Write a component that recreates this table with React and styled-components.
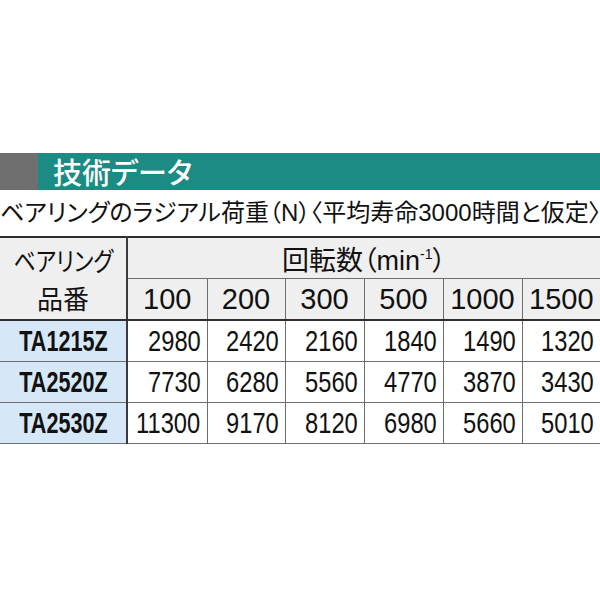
import React from "react";
import styled, { createGlobalStyle } from "styled-components";

const GlobalStyle = createGlobalStyle`
  body {
    margin: 0;
    background: #fff;
    font-family: "Liberation Sans", "Noto Sans CJK JP", sans-serif;
  }
`;

const colWidths = [127, 80, 78, 79, 79, 79, 78];

const speeds = ["100", "200", "300", "500", "1000", "1500"];

const rows = [
  { id: "TA1215Z", values: ["2980", "2420", "2160", "1840", "1490", "1320"] },
  { id: "TA2520Z", values: ["7730", "6280", "5560", "4770", "3870", "3430"] },
  { id: "TA2530Z", values: ["11300", "9170", "8120", "6980", "5660", "5010"] },
];

const App = () => {
  return (
    <>
      <GlobalStyle />
      <Page>
        <TitleBar>
          <TitleMark />
          <TitleText>技術データ</TitleText>
        </TitleBar>
        <Subtitle>ベアリングのラジアル荷重（N）〈平均寿命3000時間と仮定〉</Subtitle>
        <Table>
          <colgroup>
            {colWidths.map((w, i) => (
              <Col key={i} $w={w} />
            ))}
          </colgroup>
          <thead>
            <tr>
              <IdHead rowSpan={2}>
                <Squeeze $origin="center" $scale={0.84}>
                  ベアリング
                </Squeeze>
                <br />
                品番
              </IdHead>
              <SpanHead colSpan={6}>
                回転数（min<Sup>-1</Sup>）
              </SpanHead>
            </tr>
            <tr>
              {speeds.map((s) => (
                <NumHead key={s}>{s}</NumHead>
              ))}
            </tr>
          </thead>
          <tbody>
            {rows.map((r) => (
              <tr key={r.id}>
                <IdCell>
                  <Squeeze $origin="center" $scale={0.72}>
                    {r.id}
                  </Squeeze>
                </IdCell>
                {r.values.map((v, i) => (
                  <NumCell key={i}>
                    <Squeeze $origin="right" $scale={0.79}>
                      {v}
                    </Squeeze>
                  </NumCell>
                ))}
              </tr>
            ))}
          </tbody>
        </Table>
      </Page>
    </>
  );
};

const Page = styled.div`
  width: 600px;
  height: 600px;
  padding-top: 153px;
  box-sizing: border-box;
  overflow: hidden;
`;

const TitleBar = styled.div`
  display: flex;
  height: 37px;
  background: #1b8b84;
`;

const TitleMark = styled.div`
  width: 38px;
  background: #6f6f6f;
`;

const TitleText = styled.div`
  padding-left: 15px;
  color: #fff;
  font-family: "Noto Sans CJK JP", sans-serif;
  font-feature-settings: "palt";
  font-size: 29px;
  font-weight: 500;
  line-height: 37px;
`;

const Subtitle = styled.div`
  height: 46px;
  line-height: 46px;
  color: #111;
  font-family: "Liberation Sans", "Noto Sans CJK JP", sans-serif;
  font-feature-settings: "palt";
  font-size: 24px;
  white-space: nowrap;
`;

const Table = styled.table`
  width: 600px;
  table-layout: fixed;
  border-collapse: collapse;
  border-top: 2px solid #2e2e2e;
  border-bottom: 1px solid #9a9a9a;
  font-family: "Liberation Sans", "Noto Sans CJK JP", sans-serif;
  color: #111;
`;

const Col = styled.col`
  width: ${(p) => p.$w}px;
`;

const Squeeze = styled.span`
  display: inline-block;
  white-space: nowrap;
  transform: scaleX(${(p) => p.$scale});
  transform-origin: ${(p) => p.$origin} center;
`;

const Cell = styled.td`
  padding: 0;
  border: 1px solid #6e6e6e;
  &:first-child {
    border-left: none;
  }
  &:last-child {
    border-right: none;
  }
`;

const HeadCell = styled(Cell).attrs({ as: "th" })`
  background: #efefef;
  font-weight: normal;
  height: 40px;
`;

const IdHead = styled(HeadCell)`
  border-right: 2px solid #3a3a3a;
  border-bottom: 2px solid #2e2e2e;
  font-family: "Noto Sans CJK JP", sans-serif;
  font-feature-settings: "palt";
  font-size: 26px;
  line-height: 38px;
`;

const SpanHead = styled(HeadCell)`
  border-top: none;
  font-feature-settings: "palt";
  font-size: 27px;
  text-align: center;
`;

const Sup = styled.sup`
  font-size: 14px;
  vertical-align: 11px;
  line-height: 0;
`;

const NumHead = styled(HeadCell)`
  border-bottom: 2px solid #2e2e2e;
  font-size: 29px;
  text-align: center;
`;

const IdCell = styled(Cell)`
  background: #d6e8f7;
  border-right: 2px solid #3a3a3a;
  height: 40px;
  font-size: 30px;
  font-weight: bold;
  text-align: center;
`;

const NumCell = styled(Cell)`
  direction: rtl;
  overflow: visible;
  font-size: 30px;
  text-align: right;
  padding-right: 6px;
`;

export default App;
